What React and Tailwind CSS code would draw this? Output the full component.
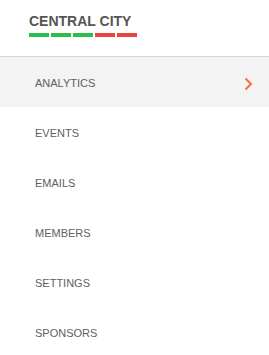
export default function App() {
  const items = ["ANALYTICS", "EVENTS", "EMAILS", "MEMBERS", "SETTINGS", "SPONSORS"];
  const bars = ["bg-[#2bbd4f]", "bg-[#2bbd4f]", "bg-[#2bbd4f]", "bg-[#e8453f]", "bg-[#e8453f]"];
  return (
    <div className="w-[269px] h-[355px] bg-white overflow-hidden" style={{ fontFamily: '"Liberation Sans", Arial, sans-serif' }}>
      <div className="h-[57px] border-b border-[#d6d6d6] pl-[29px] pt-[13px]">
        <div className="text-[14px] leading-[16px] font-bold text-[#555]">CENTRAL CITY</div>
        <div className="flex gap-[2px] mt-[4px]">
          {bars.map((b, i) => (
            <div key={i} className={`w-[20px] h-[4px] ${b}`} />
          ))}
        </div>
      </div>
      <div className="flex flex-col">
        {items.map((t, i) => (
          <div
            key={t}
            className={`h-[50px] flex items-center justify-between pt-[3px] pl-[35px] pr-[16px] text-[11px] text-[#606060] ${i === 0 ? "bg-[#f3f3f3]" : ""}`}
          >
            <span>{t}</span>
            {i === 0 && (
              <svg width="9" height="14" viewBox="0 0 9 14" fill="none">
                <path d="M1.5 1.5 L7 7 L1.5 12.5" stroke="#ff6a3d" strokeWidth="2" />
              </svg>
            )}
          </div>
        ))}
      </div>
    </div>
  );
}
